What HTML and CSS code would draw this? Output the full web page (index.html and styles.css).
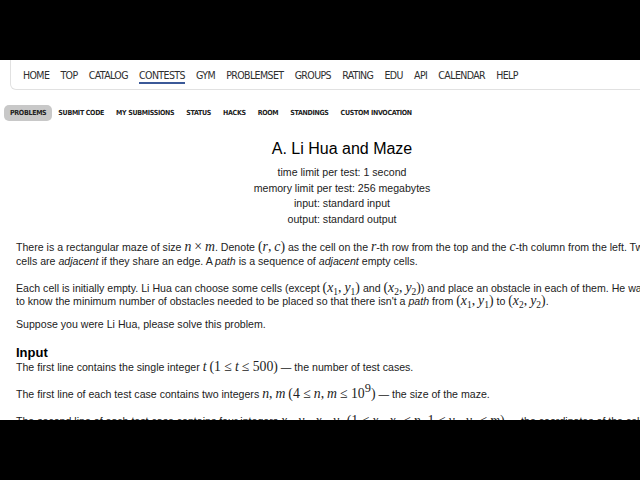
FILE: index.html
```html
<!DOCTYPE html>
<html>
<head>
<meta charset="utf-8">
<link rel="stylesheet" href="styles.css">
</head>
<body>
<div class="bar"></div>
<div class="viewport">
  <div class="page">
    <nav class="menu">
      <a>HOME</a><a>TOP</a><a>CATALOG</a><a class="active">CONTESTS</a><a>GYM</a><a>PROBLEMSET</a><a>GROUPS</a><a>RATING</a><a>EDU</a><a>API</a><a>CALENDAR</a><a>HELP</a>
    </nav>
    <div class="tabs">
      <a class="current">PROBLEMS</a><a>SUBMIT CODE</a><a>MY SUBMISSIONS</a><a>STATUS</a><a>HACKS</a><a>ROOM</a><a>STANDINGS</a><a>CUSTOM INVOCATION</a>
    </div>
    <div class="problem">
      <div class="header">
        <div class="title">A. Li Hua and Maze</div>
        <div class="limit">time limit per test: 1 second</div>
        <div class="limit">memory limit per test: 256 megabytes</div>
        <div class="limit">input: standard input</div>
        <div class="limit">output: standard output</div>
      </div>
      <p class="wide">There is a rectangular maze of size <span class="m">n</span> <span class="mu">×</span> <span class="m">m</span>. Denote <span class="mu">(</span><span class="m">r</span><span class="mu">,</span> <span class="m">c</span><span class="mu">)</span> as the cell on the <span class="m">r</span>-th row from the top and the <span class="m">c</span>-th column from the left. Two cells are <i>adjacent</i> if they share an edge. A <i>path</i> is a sequence of <i>adjacent</i> empty cells.</p>
      <p class="tight">Each cell is initially empty. Li Hua can choose some cells (except <span class="mu">(</span><span class="m">x</span><sub>1</sub><span class="mu">,</span> <span class="m">y</span><sub>1</sub><span class="mu">)</span> and <span class="mu">(</span><span class="m">x</span><sub>2</sub><span class="mu">,</span> <span class="m">y</span><sub>2</sub><span class="mu">)</span>) and place an obstacle in each of them. He wants to know the minimum number of obstacles needed to be placed so that there isn't a <i>path</i> from <span class="mu">(</span><span class="m">x</span><sub>1</sub><span class="mu">,</span> <span class="m">y</span><sub>1</sub><span class="mu">)</span> to <span class="mu">(</span><span class="m">x</span><sub>2</sub><span class="mu">,</span> <span class="m">y</span><sub>2</sub><span class="mu">)</span>.</p>
      <p>Suppose you were Li Hua, please solve this problem.</p>
      <div class="section">Input</div>
      <p class="wide">The first line contains the single integer <span class="m">t</span> <span class="mu">(1 ≤</span> <span class="m">t</span> <span class="mu">≤ 500)</span> — the number of test cases.</p>
      <p class="wide">The first line of each test case contains two integers <span class="m">n</span><span class="mu">,</span> <span class="m">m</span> <span class="mu">(4 ≤</span> <span class="m">n</span><span class="mu">,</span> <span class="m">m</span> <span class="mu">≤ 10<sup>9</sup>)</span> — the size of the maze.</p>
      <p>The second line of each test case contains four integers <span class="m">x</span><sub>1</sub><span class="mu">,</span> <span class="m">y</span><sub>1</sub><span class="mu">,</span> <span class="m">x</span><sub>2</sub><span class="mu">,</span> <span class="m">y</span><sub>2</sub> <span class="mu">(1 ≤</span> <span class="m">x</span><sub>1</sub><span class="mu">,</span> <span class="m">x</span><sub>2</sub> <span class="mu">≤</span> <span class="m">n</span><span class="mu">, 1 ≤</span> <span class="m">y</span><sub>1</sub><span class="mu">,</span> <span class="m">y</span><sub>2</sub> <span class="mu">≤</span> <span class="m">m</span><span class="mu">)</span> — the coordinates of the cells.</p>
    </div>
  </div>
</div>
<div class="bar"></div>
</body>
</html>
```
FILE: styles.css
```css
html, body {
  margin: 0;
  padding: 0;
  background: #000;
}
.bar {
  height: 60px;
  background: #000;
}
.viewport {
  height: 360px;
  overflow: hidden;
  background: #fff;
}
.page {
  width: 720px;
}
.menu {
  margin-left: 10px;
  height: 29px;
  border: 1px solid #e1e1e1;
  border-top: none;
  border-radius: 0 0 6px 6px;
  display: flex;
  align-items: center;
  padding-left: 12px;
  gap: 11.2px;
  font-family: "DejaVu Sans Condensed", "DejaVu Sans", sans-serif;
  font-stretch: condensed;
  font-size: 10.5px;
  letter-spacing: -0.6px;
  color: #2e2e2e;
}
.menu a {
  position: relative;
  line-height: 14px;
}
.menu a.active::after {
  content: "";
  position: absolute;
  left: 0;
  right: 0;
  bottom: -2px;
  height: 2px;
  background: #3b5998;
}
.tabs {
  display: flex;
  margin-top: 15px;
  padding-left: 4px;
  font-family: "DejaVu Sans Condensed", "DejaVu Sans", sans-serif;
  font-stretch: condensed;
  font-weight: bold;
  font-size: 7px;
  letter-spacing: -0.3px;
  color: #222;
}
.tabs a {
  padding: 0 6px;
  height: 16px;
  line-height: 16px;
}
.tabs a.current {
  background: #c8c8c8;
  border-radius: 5px;
}
.problem {
  width: 652px;
  margin-left: 16px;
  font-family: "Liberation Sans", Arial, sans-serif;
  font-size: 10.6px;
  color: #222;
}
.header {
  text-align: center;
  margin-top: 18px;
  margin-bottom: 14px;
}
.title {
  font-size: 16px;
  line-height: 20px;
  color: #000;
  margin-bottom: 6px;
}
.limit {
  line-height: 15.5px;
}
.problem p {
  margin: 0 6px 11.5px 0;
  line-height: 13.6px;
}
.problem p.wide {
  margin-bottom: 13.5px;
}
.problem p.tight {
  margin-bottom: 9.5px;
}
.m {
  font-family: "Liberation Serif", "DejaVu Serif", serif;
  font-style: italic;
  font-size: 1.3em;
  line-height: 0;
}
.mu {
  font-family: "Liberation Serif", "DejaVu Serif", serif;
  font-size: 1.3em;
  line-height: 0;
}
sub, sup {
  font-family: "Liberation Serif", serif;
  font-size: 0.9em;
  line-height: 0;
}
.section {
  font-weight: bold;
  font-size: 13px;
  line-height: 15px;
  margin-top: 13px;
  margin-bottom: 1px;
  color: #000;
}
```
